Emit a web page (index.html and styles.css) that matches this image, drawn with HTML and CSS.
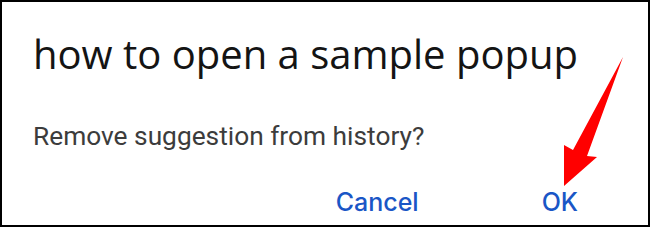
FILE: index.html
```html
<!DOCTYPE html>
<html>
<head>
<meta charset="utf-8">
<link rel="stylesheet" href="styles.css">
</head>
<body>
<div class="dialog">
  <h1 class="title">how to open a sample popup</h1>
  <p class="message">Remove suggestion from history?</p>
  <div class="actions">
    <span class="btn btn-cancel">Cancel</span>
    <span class="btn btn-ok">OK</span>
  </div>
  <svg class="arrow" width="650" height="227" viewBox="0 0 650 227">
    <polygon points="623,57 587,156 597,157 564,186 564,145 573,150" fill="#ff0000"/>
  </svg>
</div>
</body>
</html>
```
FILE: styles.css
```css
html, body {
  margin: 0;
  padding: 0;
  background: #fff;
}
.dialog {
  position: relative;
  box-sizing: border-box;
  width: 650px;
  height: 227px;
  border: 2px solid #000;
  padding: 0 0 0 31px;
  display: flex;
  flex-direction: column;
  overflow: hidden;
}
.title {
  margin: 24px 0 0 0;
  font-family: "Open Sans", sans-serif;
  font-weight: 400;
  font-size: 40px;
  line-height: 56px;
  color: #141414;
}
.message {
  margin: 36px 0 0 0;
  font-family: Roboto, sans-serif;
  font-size: 26.3px;
  line-height: 36px;
  color: #3c3c3c;
}
.actions {
  display: flex;
  justify-content: flex-end;
  gap: 123px;
  padding-right: 70px;
  margin-top: 31px;
}
.btn {
  font-family: Inter, sans-serif;
  font-weight: 500;
  font-size: 25px;
  line-height: 34px;
  color: #1a56c6;
}
.arrow {
  position: absolute;
  left: -2px;
  top: -2px;
}
```
